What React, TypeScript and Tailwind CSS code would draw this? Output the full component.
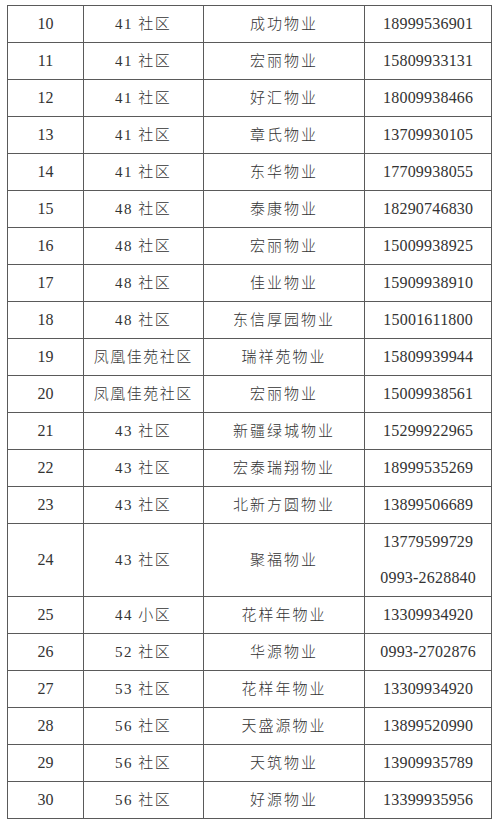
import React from "react";

type Row = { n: string; c: string; p: string; t: string[] };

const rows: Row[] = [
  { n: "10", c: "41 社区", p: "成功物业", t: ["18999536901"] },
  { n: "11", c: "41 社区", p: "宏丽物业", t: ["15809933131"] },
  { n: "12", c: "41 社区", p: "好汇物业", t: ["18009938466"] },
  { n: "13", c: "41 社区", p: "章氏物业", t: ["13709930105"] },
  { n: "14", c: "41 社区", p: "东华物业", t: ["17709938055"] },
  { n: "15", c: "48 社区", p: "泰康物业", t: ["18290746830"] },
  { n: "16", c: "48 社区", p: "宏丽物业", t: ["15009938925"] },
  { n: "17", c: "48 社区", p: "佳业物业", t: ["15909938910"] },
  { n: "18", c: "48 社区", p: "东信厚园物业", t: ["15001611800"] },
  { n: "19", c: "凤凰佳苑社区", p: "瑞祥苑物业", t: ["15809939944"] },
  { n: "20", c: "凤凰佳苑社区", p: "宏丽物业", t: ["15009938561"] },
  { n: "21", c: "43 社区", p: "新疆绿城物业", t: ["15299922965"] },
  { n: "22", c: "43 社区", p: "宏泰瑞翔物业", t: ["18999535269"] },
  { n: "23", c: "43 社区", p: "北新方圆物业", t: ["13899506689"] },
  { n: "24", c: "43 社区", p: "聚福物业", t: ["13779599729", "0993-2628840"] },
  { n: "25", c: "44 小区", p: "花样年物业", t: ["13309934920"] },
  { n: "26", c: "52 社区", p: "华源物业", t: ["0993-2702876"] },
  { n: "27", c: "53 社区", p: "花样年物业", t: ["13309934920"] },
  { n: "28", c: "56 社区", p: "天盛源物业", t: ["13899520990"] },
  { n: "29", c: "56 社区", p: "天筑物业", t: ["13909935789"] },
  { n: "30", c: "56 社区", p: "好源物业", t: ["13399935956"] },
];

const font = {
  fontFamily: '"Liberation Serif", "Noto Sans CJK SC", serif',
};

export default function App() {
  return (
    <div className="w-[500px] h-[826px] bg-white overflow-hidden">
      <div
        className="ml-[7px] mt-[5px] w-[485px] border-l border-t border-[#5a5a5a] text-[#333333] text-[16px]"
        style={font}
      >
        {rows.map((r) => {
          const h = r.t.length > 1 ? "h-[73px]" : "h-[37px]";
          return (
            <div key={r.n} className={`flex ${h}`}>
              <div className="w-[76px] border-r border-b border-[#5a5a5a] flex items-center justify-center">
                {r.n}
              </div>
              <div className="w-[120px] border-r border-b border-[#5a5a5a] flex items-center justify-center tracking-[1.5px] text-[15px] font-light">
                {r.c}
              </div>
              <div className="w-[162px] border-r border-b border-[#5a5a5a] flex items-center justify-center tracking-[2px] text-[15px] font-light">
                {r.p}
              </div>
              <div className="w-[127px] border-r border-b border-[#5a5a5a] flex flex-col">
                {r.t.map((t) => (
                  <div key={t} className="flex-1 flex items-center justify-center tracking-[0.2px]">
                    {t}
                  </div>
                ))}
              </div>
            </div>
          );
        })}
      </div>
    </div>
  );
}
